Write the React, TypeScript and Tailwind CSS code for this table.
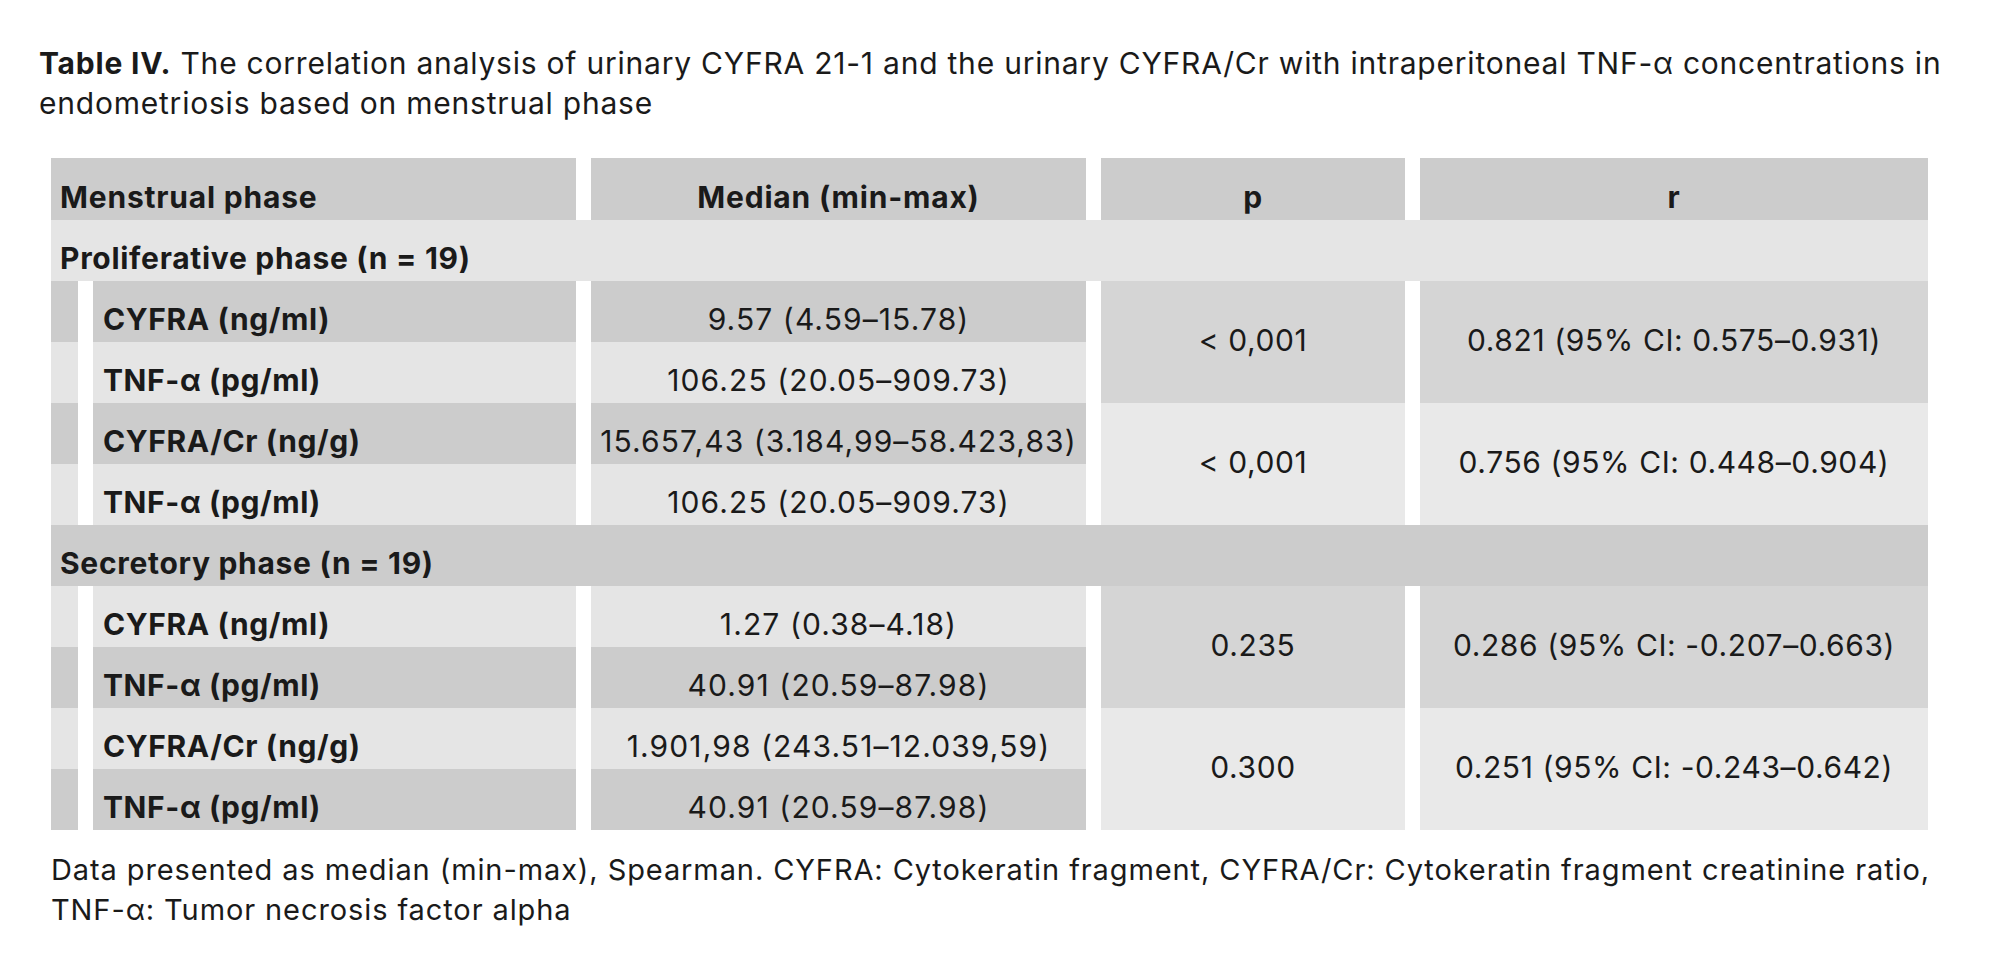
import React from 'react'

type SubRow = { label: string; median: string }
type Pair = { rows: [SubRow, SubRow]; p: string; r: string }
type Group = { title: string; titleShade: string; shades: string[]; pairs: Pair[] }

const DARK = 'bg-[#cccccc]'
const LIGHT = 'bg-[#e5e5e5]'
const P_DARK = 'bg-[#d5d5d5]'
const P_LIGHT = 'bg-[#e9e9e9]'

const groups: Group[] = [
  {
    title: 'Proliferative phase (n = 19)',
    titleShade: LIGHT,
    shades: [DARK, LIGHT, DARK, LIGHT],
    pairs: [
      {
        rows: [
          { label: 'CYFRA (ng/ml)', median: '9.57 (4.59–15.78)' },
          { label: 'TNF-α (pg/ml)', median: '106.25 (20.05–909.73)' },
        ],
        p: '< 0,001',
        r: '0.821 (95% CI: 0.575–0.931)',
      },
      {
        rows: [
          { label: 'CYFRA/Cr (ng/g)', median: '15.657,43 (3.184,99–58.423,83)' },
          { label: 'TNF-α (pg/ml)', median: '106.25 (20.05–909.73)' },
        ],
        p: '< 0,001',
        r: '0.756 (95% CI: 0.448–0.904)',
      },
    ],
  },
  {
    title: 'Secretory phase (n = 19)',
    titleShade: DARK,
    shades: [LIGHT, DARK, LIGHT, DARK],
    pairs: [
      {
        rows: [
          { label: 'CYFRA (ng/ml)', median: '1.27 (0.38–4.18)' },
          { label: 'TNF-α (pg/ml)', median: '40.91 (20.59–87.98)' },
        ],
        p: '0.235',
        r: '0.286 (95% CI: -0.207–0.663)',
      },
      {
        rows: [
          { label: 'CYFRA/Cr (ng/g)', median: '1.901,98 (243.51–12.039,59)' },
          { label: 'TNF-α (pg/ml)', median: '40.91 (20.59–87.98)' },
        ],
        p: '0.300',
        r: '0.251 (95% CI: -0.243–0.642)',
      },
    ],
  },
]

const cell = 'h-[61px] pt-[22px] leading-[32px] whitespace-nowrap'
const head = 'h-[62px] pt-[23px] leading-[32px] font-bold tracking-[0.8px]'

export default function App() {
  return (
    <div className="w-[2000px] h-[968px] bg-white text-[#1a1a1a] font-['Inter',sans-serif] overflow-hidden">
      <div className="pl-[39px] pt-[43px] text-[30px] leading-[40px] tracking-[0.78px] whitespace-nowrap">
        <div>
          <span className="font-bold">Table IV.</span> The correlation analysis of urinary CYFRA 21-1 and the urinary CYFRA/Cr with intraperitoneal TNF-α concentrations in
        </div>
        <div>endometriosis based on menstrual phase</div>
      </div>

      <div className="ml-[51px] mt-[35px] w-[1877px] grid grid-cols-[27px_483px_495px_304px_508px] gap-x-[15px] text-[30px]">
        {/* header */}
        <div className={`col-span-2 pl-[9px] ${head} ${DARK}`}>Menstrual phase</div>
        <div className={`text-center ${head} ${DARK}`}>Median (min-max)</div>
        <div className={`text-center ${head} ${DARK}`}>p</div>
        <div className={`text-center ${head} ${DARK}`}>r</div>

        {groups.map((g) => (
          <React.Fragment key={g.title}>
            <div className={`col-span-5 ${cell} pl-[9px] font-bold tracking-[0.7px] ${g.titleShade}`}>{g.title}</div>
            {g.pairs.map((pair, pi) => (
              <React.Fragment key={pi}>
                {pair.rows.map((row, ri) => {
                  const shade = g.shades[pi * 2 + ri]
                  const pShade = pi === 0 ? P_DARK : P_LIGHT
                  return (
                    <React.Fragment key={ri}>
                      <div className={`h-[61px] ${shade}`} />
                      <div className={`${cell} pl-[10px] font-bold tracking-[0.6px] ${shade}`}>{row.label}</div>
                      <div className={`${cell} text-center tracking-[1.1px] ${shade}`}>{row.median}</div>
                      {ri === 0 && (
                        <>
                          <div className={`row-span-2 flex items-center justify-center leading-[32px] pb-[4px] tracking-[0.6px] ${pShade}`}>{pair.p}</div>
                          <div className={`row-span-2 flex items-center justify-center leading-[32px] pb-[4px] tracking-[0.6px] whitespace-nowrap ${pShade}`}>{pair.r}</div>
                        </>
                      )}
                    </React.Fragment>
                  )
                })}
              </React.Fragment>
            ))}
          </React.Fragment>
        ))}
      </div>

      <div className="pl-[51px] mt-[20px] text-[29px] leading-[40px] tracking-[0.9px] whitespace-nowrap">
        <div>Data presented as median (min-max), Spearman. CYFRA: Cytokeratin fragment, CYFRA/Cr: Cytokeratin fragment creatinine ratio,</div>
        <div>TNF-α: Tumor necrosis factor alpha</div>
      </div>
    </div>
  )
}
